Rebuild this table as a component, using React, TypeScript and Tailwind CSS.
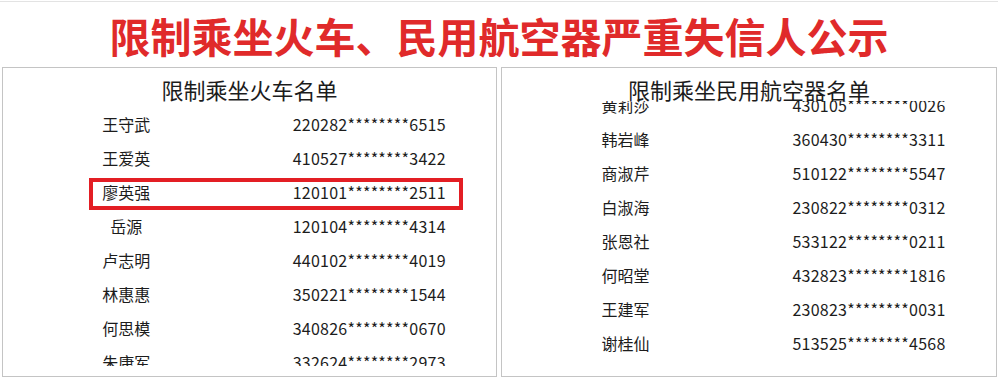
const trainList = [
  { name: "王守武", id: "220282********6515" },
  { name: "王爱英", id: "410527********3422" },
  { name: "廖英强", id: "120101********2511" },
  { name: "岳源", id: "120104********4314" },
  { name: "卢志明", id: "440102********4019" },
  { name: "林惠惠", id: "350221********1544" },
  { name: "何思模", id: "340826********0670" },
  { name: "朱康军", id: "332624********2973" },
];

const planeList = [
  { name: "黄莉莎", id: "430105********0026" },
  { name: "韩岩峰", id: "360430********3311" },
  { name: "商淑芹", id: "510122********5547" },
  { name: "白淑海", id: "230822********0312" },
  { name: "张恩社", id: "533122********0211" },
  { name: "何昭堂", id: "432823********1816" },
  { name: "王建军", id: "230823********0031" },
  { name: "谢桂仙", id: "513525********4568" },
  { name: "刘国华", id: "110105********2217" },
];

type Person = { name: string; id: string };

function Rows({ list }: { list: Person[] }) {
  return (
    <>
      {list.map((p) => (
        <div
          key={p.id}
          className="grid grid-cols-2 h-[34px] items-center text-center text-[16px] leading-[16px] text-[#1c1c1c]"
        >
          <span>{p.name}</span>
          <span className="pr-[7px] tracking-[0.25px]">{p.id}</span>
        </div>
      ))}
    </>
  );
}

export default function App() {
  return (
    <div
      className="w-[998px] h-[378px] bg-white overflow-hidden"
      style={{ fontFamily: '"Noto Sans CJK SC", "Noto Sans", sans-serif' }}
    >
      <div className="mt-px h-px bg-[#e3e3e3]" />

      <h1 className="mt-[13px] h-[41px] text-center text-[41px] leading-[41px] font-bold text-[#e02a2a] whitespace-nowrap">
        限制乘坐火车、民用航空器严重失信人公示
      </h1>

      <div className="mt-[11px] flex pl-[2px] gap-[4px]">
        {/* train */}
        <section className="relative w-[495px] h-[310px] border border-[#c4c4c4]">
          <h3 className="pt-[10px] text-center text-[22px] leading-[22px] text-[#1c1c1c]">
            限制乘坐火车名单
          </h3>
          <div className="mt-[2px] h-[264px] overflow-hidden">
            <div className="pt-[5px]">
              <Rows list={trainList} />
            </div>
          </div>
          <div className="absolute left-[86px] top-[110px] w-[374px] h-[32px] border-4 border-[#e31e24]" />
        </section>

        {/* plane */}
        <section className="w-[496px] h-[310px] border border-[#c4c4c4]">
          <h3 className="pt-[10px] text-center text-[22px] leading-[22px] text-[#1c1c1c]">
            限制乘坐民用航空器名单
          </h3>
          <div className="mt-[1px] h-[265px] overflow-hidden">
            <div className="-mt-[13px]">
              <Rows list={planeList} />
            </div>
          </div>
        </section>
      </div>
    </div>
  );
}
